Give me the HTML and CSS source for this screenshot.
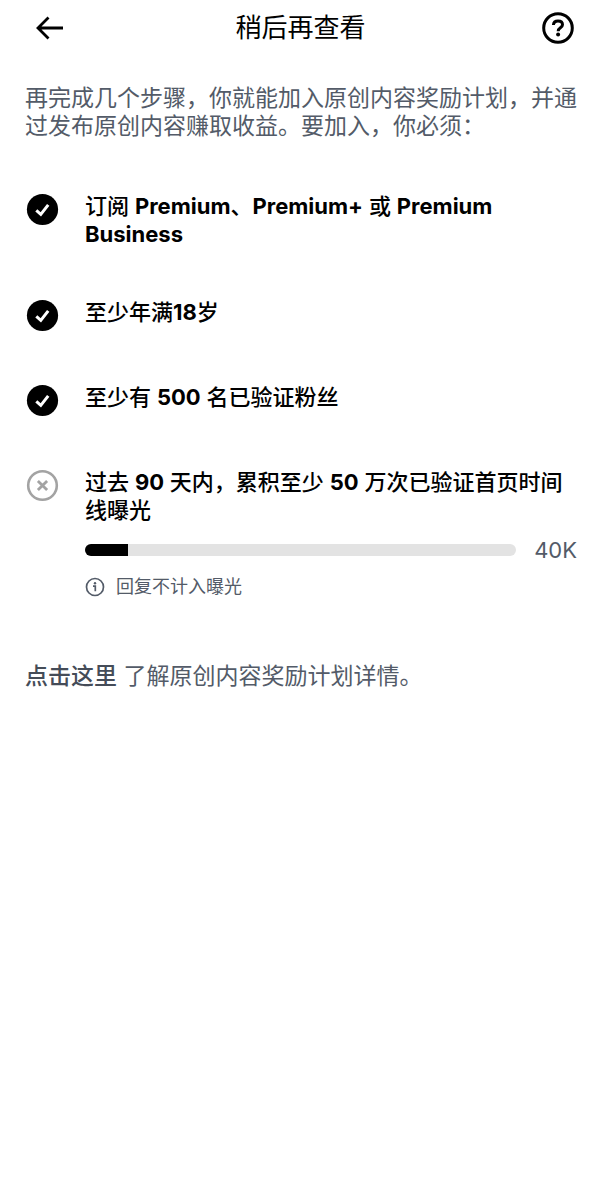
FILE: index.html
```
<!DOCTYPE html>
<html lang="zh-CN">
<head>
    <meta charset="UTF-8">
    <meta name="viewport" content="width=device-width, initial-scale=1.0">
    <title>稍后再查看</title>
    <link rel="stylesheet" href="styles.css">
</head>
<body>
    <header class="top-bar">
        <button class="icon-btn" type="button" aria-label="返回">
            <svg width="32" height="32" viewBox="0 0 32 32" fill="none" stroke="#000" stroke-width="2.8">
                <path d="M30 16H4.5M15.5 5.5L5 16L15.5 26.5" />
            </svg>
        </button>
        <h1>稍后再查看</h1>
        <button class="icon-btn" type="button" aria-label="帮助">
            <svg width="32" height="32" viewBox="0 0 32 32" fill="none" stroke="#000">
                <circle cx="16" cy="16" r="14.3" stroke-width="3" />
                <path d="M11.4 13C11.6 10.5 13.4 9.1 16 9.1C18.7 9.1 20.5 10.6 20.5 12.8C20.5 16 16.2 15.7 16.2 19.2" stroke-width="3" />
                <circle cx="16.1" cy="22.5" r="2" fill="#000" stroke="none" />
            </svg>
        </button>
    </header>

    <main>
        <p class="intro">再完成几个步骤，你就能加入原创内容奖励计划，并通过发布原创内容赚取收益。要加入，你必须：</p>

        <ul class="steps">
            <li class="step">
                <svg class="step-icon" viewBox="0 0 35 35">
                    <circle cx="17.5" cy="17.5" r="15.6" />
                    <path d="M11.3 18.4L15.8 22.4L23.2 12.8" fill="none" stroke="#fff" stroke-width="3" />
                </svg>
                <div class="step-body">
                    <h2>订阅 <b>Premium</b>、<b>Premium+</b> 或 <b>Premium Business</b></h2>
                </div>
            </li>
            <li class="step">
                <svg class="step-icon" viewBox="0 0 35 35">
                    <circle cx="17.5" cy="17.5" r="15.6" />
                    <path d="M11.3 18.4L15.8 22.4L23.2 12.8" fill="none" stroke="#fff" stroke-width="3" />
                </svg>
                <div class="step-body">
                    <h2>至少年满<b>18</b>岁</h2>
                </div>
            </li>
            <li class="step">
                <svg class="step-icon" viewBox="0 0 35 35">
                    <circle cx="17.5" cy="17.5" r="15.6" />
                    <path d="M11.3 18.4L15.8 22.4L23.2 12.8" fill="none" stroke="#fff" stroke-width="3" />
                </svg>
                <div class="step-body">
                    <h2>至少有 <b>500</b> 名已验证粉丝</h2>
                </div>
            </li>
            <li class="step">
                <svg class="step-icon" viewBox="0 0 35 35" fill="none" stroke="#a3a3a3">
                    <circle cx="17.5" cy="17.5" r="14.3" stroke-width="2.6" />
                    <path d="M12.9 12.9L22.1 22.1M22.1 12.9L12.9 22.1" stroke-width="2.8" />
                </svg>
                <div class="step-body">
                    <h2>过去 <b>90</b> 天内，累积至少 <b>50</b> 万次已验证首页时间线曝光</h2>
                    <div class="progress">
                        <div class="progress-track">
                            <div class="progress-fill" style="width: 10%"></div>
                        </div>
                        <span class="progress-value">40K</span>
                    </div>
                    <p class="note">
                        <svg width="20" height="20" viewBox="0 0 20 20" fill="none" stroke="#535b68">
                            <circle cx="10" cy="10" r="8.5" stroke-width="1.7" />
                            <path d="M8 9.2H10.3V14.2" stroke-width="1.7" />
                            <circle cx="10" cy="6.2" r="1.2" fill="#535b68" stroke="none" />
                        </svg>
                        回复不计入曝光
                    </p>
                </div>
            </li>
        </ul>

        <p class="more"><a href="#">点击这里</a> 了解原创内容奖励计划详情。</p>
    </main>
</body>
</html>
```
FILE: styles.css
```
* {
    box-sizing: border-box;
}

body {
    margin: 0;
    font-family: Inter, "Noto Sans CJK SC", sans-serif;
    background-color: #fff;
    color: #000;
}

h1, h2, p, ul {
    margin: 0;
    padding: 0;
}

.top-bar {
    display: flex;
    align-items: center;
    justify-content: space-between;
    height: 56px;
    padding: 0 27px;
}

.top-bar h1 {
    font-size: 26px;
    font-weight: 400;
    line-height: 36px;
}

.icon-btn {
    display: flex;
    justify-content: flex-end;
    width: 38px;
    padding: 0;
    border: none;
    background: none;
    cursor: pointer;
}

main {
    padding: 28px 24px 28px 25px;
}

.intro {
    font-size: 23px;
    line-height: 28px;
    color: #535b68;
}

.steps {
    display: flex;
    flex-direction: column;
    gap: 50px;
    margin-top: 52px;
    list-style: none;
}

.step {
    display: flex;
    gap: 25px;
}

.step-icon {
    flex: none;
    width: 35px;
    height: 35px;
}

.step-body {
    flex: 1;
}

.step h2 {
    font-size: 22px;
    font-weight: 500;
    line-height: 28px;
}

.step b {
    font-weight: 700;
}

.progress {
    display: flex;
    align-items: center;
    gap: 18px;
    margin-top: 12px;
}

.progress-track {
    flex: 1;
    height: 12px;
    border-radius: 6px;
    background-color: #e3e3e3;
    overflow: hidden;
}

.progress-fill {
    height: 100%;
    background-color: #000;
}

.progress-value {
    font-size: 22px;
    line-height: 28px;
    color: #535b68;
}

.note {
    display: flex;
    align-items: center;
    gap: 11px;
    margin-top: 10px;
    font-size: 18px;
    line-height: 26px;
    color: #535b68;
}

.more {
    margin-top: 62px;
    font-size: 23px;
    line-height: 28px;
    color: #535b68;
}

.more a {
    color: #454c58;
    font-weight: 500;
    text-decoration: none;
}
```
